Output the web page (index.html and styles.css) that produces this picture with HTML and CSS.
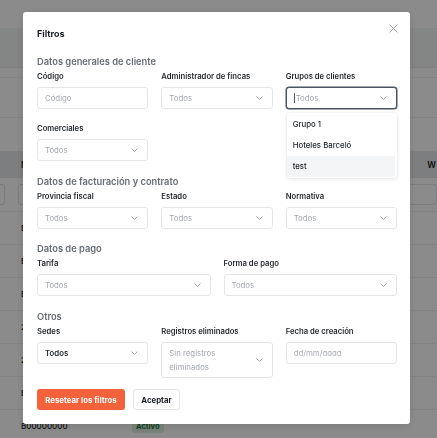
FILE: index.html
```html
<!DOCTYPE html>
<html lang="es">
<head>
<meta charset="utf-8">
<title>Clientes</title>
<link rel="stylesheet" href="styles.css">
</head>
<body>
<div class="page">
  <div class="topbar"></div>
  <div class="band"></div>
  <div class="toolbar"></div>
  <div class="table">
    <div class="thead">
      <span class="th th-first">NIF</span>
      <span class="th th-last">W</span>
    </div>
    <div class="tfilter">
      <span class="fbox fbox-a"></span>
      <span class="fbox fbox-b"></span>
      <span class="fbox fbox-c"></span>
    </div>
    <div class="trow"><span class="cell">E07000000</span></div>
    <div class="trow"><span class="cell">B07000000</span></div>
    <div class="trow"><span class="cell">E07000000</span></div>
    <div class="trow"><span class="cell">2000000</span></div>
    <div class="trow"><span class="cell">2000000</span></div>
    <div class="trow"><span class="cell">E07000000</span></div>
    <div class="trow"><span class="cell">B00000000</span><span class="badge">Activo</span></div>
  </div>
</div>

<div class="overlay"></div>

<div class="modal">
  <div class="modal-head">
    <h2 class="modal-title">Filtros</h2>
    <svg class="close" width="9" height="9" viewBox="0 0 9 9"><path d="M0.5 0.5L8.5 8.5M8.5 0.5L0.5 8.5" stroke="#a6a9ae" stroke-width="1" fill="none"/></svg>
  </div>

  <section class="group group-first">
    <h3 class="group-title">Datos generales de cliente</h3>
    <div class="grid3">
      <div class="field">
        <label class="label">Código</label>
        <div class="control"><span class="ph">Código</span></div>
      </div>
      <div class="field">
        <label class="label">Administrador de fincas</label>
        <div class="control"><span class="ph">Todos</span><svg class="chev" width="7" height="4" viewBox="0 0 7 4"><polyline points="0.5,0.5 3.5,3.5 6.5,0.5" fill="none" stroke="#9a9ea5" stroke-width="0.9"/></svg></div>
      </div>
      <div class="field field-open">
        <label class="label">Grupos de clientes</label>
        <div class="control control-focus"><span class="ph"><span class="caret"></span>Todos</span><svg class="chev" width="7" height="4" viewBox="0 0 7 4"><polyline points="0.5,0.5 3.5,3.5 6.5,0.5" fill="none" stroke="#9a9ea5" stroke-width="0.9"/></svg></div>
        <ul class="menu">
          <li class="opt">Grupo 1</li>
          <li class="opt">Hoteles Barceló</li>
          <li class="opt opt-hover">test</li>
        </ul>
      </div>
      <div class="field">
        <label class="label">Comerciales</label>
        <div class="control"><span class="ph">Todos</span><svg class="chev" width="7" height="4" viewBox="0 0 7 4"><polyline points="0.5,0.5 3.5,3.5 6.5,0.5" fill="none" stroke="#9a9ea5" stroke-width="0.9"/></svg></div>
      </div>
    </div>
  </section>

  <section class="group group-billing">
    <h3 class="group-title">Datos de facturación y contrato</h3>
    <div class="grid3">
      <div class="field">
        <label class="label">Provincia fiscal</label>
        <div class="control"><span class="ph">Todos</span><svg class="chev" width="7" height="4" viewBox="0 0 7 4"><polyline points="0.5,0.5 3.5,3.5 6.5,0.5" fill="none" stroke="#9a9ea5" stroke-width="0.9"/></svg></div>
      </div>
      <div class="field">
        <label class="label">Estado</label>
        <div class="control"><span class="ph">Todos</span><svg class="chev" width="7" height="4" viewBox="0 0 7 4"><polyline points="0.5,0.5 3.5,3.5 6.5,0.5" fill="none" stroke="#9a9ea5" stroke-width="0.9"/></svg></div>
      </div>
      <div class="field">
        <label class="label">Normativa</label>
        <div class="control"><span class="ph">Todos</span><svg class="chev" width="7" height="4" viewBox="0 0 7 4"><polyline points="0.5,0.5 3.5,3.5 6.5,0.5" fill="none" stroke="#9a9ea5" stroke-width="0.9"/></svg></div>
      </div>
    </div>
  </section>

  <section class="group">
    <h3 class="group-title">Datos de pago</h3>
    <div class="grid2">
      <div class="field">
        <label class="label">Tarifa</label>
        <div class="control"><span class="ph">Todos</span><svg class="chev" width="7" height="4" viewBox="0 0 7 4"><polyline points="0.5,0.5 3.5,3.5 6.5,0.5" fill="none" stroke="#9a9ea5" stroke-width="0.9"/></svg></div>
      </div>
      <div class="field">
        <label class="label">Forma de pago</label>
        <div class="control"><span class="ph">Todos</span><svg class="chev" width="7" height="4" viewBox="0 0 7 4"><polyline points="0.5,0.5 3.5,3.5 6.5,0.5" fill="none" stroke="#9a9ea5" stroke-width="0.9"/></svg></div>
      </div>
    </div>
  </section>

  <section class="group group-last">
    <h3 class="group-title">Otros</h3>
    <div class="grid3">
      <div class="field">
        <label class="label">Sedes</label>
        <div class="control"><span class="val">Todos</span><svg class="chev" width="7" height="4" viewBox="0 0 7 4"><polyline points="0.5,0.5 3.5,3.5 6.5,0.5" fill="none" stroke="#9a9ea5" stroke-width="0.9"/></svg></div>
      </div>
      <div class="field">
        <label class="label">Registros eliminados</label>
        <div class="control control-tall"><span class="ph ph-wrap">Sin registros eliminados</span><svg class="chev" width="7" height="4" viewBox="0 0 7 4"><polyline points="0.5,0.5 3.5,3.5 6.5,0.5" fill="none" stroke="#9a9ea5" stroke-width="0.9"/></svg></div>
      </div>
      <div class="field">
        <label class="label">Fecha de creación</label>
        <div class="control"><span class="ph ph-date">dd/mm/aaaa</span></div>
      </div>
    </div>
  </section>

  <div class="actions">
    <button class="btn btn-reset">Resetear los filtros</button>
    <button class="btn btn-ok">Aceptar</button>
  </div>
</div>
</body>
</html>
```

FILE: styles.css
```css
* { box-sizing: border-box; }

html, body {
  margin: 0;
  padding: 0;
  width: 437px;
  height: 438px;
  overflow: hidden;
  font-family: "Inter", "Noto Sans", sans-serif;
  color: #1f2328;
  background: #ffffff;
}

/* ---------- page behind the dialog ---------- */
.page {
  display: flex;
  flex-direction: column;
}

.topbar {
  height: 28px;
  background: #ffffff;
}

.band {
  height: 40px;
  background: #f3f4f5;
  border-bottom: 1px solid #e9eaec;
}

.toolbar {
  margin-top: 9px;
  height: 41px;
  background: #ffffff;
  border-top: 1px solid #f0f0f2;
  border-bottom: 1px solid #eceef0;
}

.table {
  margin-top: 33px;
  display: flex;
  flex-direction: column;
}

.thead {
  height: 27px;
  background: #e6e7e9;
  display: flex;
  align-items: center;
  justify-content: space-between;
  padding: 0 0 0 21px;
  font-size: 8.5px;
  font-weight: 600;
  color: #222;
}

.th-last {
  margin-right: 1px;
}

.tfilter {
  height: 34px;
  display: flex;
  align-items: center;
  border-bottom: 1px solid #eceef0;
}

.fbox {
  height: 21px;
  border: 1px solid #dfe1e4;
  border-radius: 3px;
  background: #fff;
}

.fbox-a { width: 27px; margin-left: -20px; }
.fbox-b { width: 393px; margin-left: 13px; }
.fbox-c { width: 40px; margin-left: 15px; }

.trow {
  height: 33px;
  display: flex;
  align-items: center;
  padding-left: 21px;
  border-bottom: 1px solid #eceef0;
  font-size: 8px;
  font-weight: 500;
  color: #222;
}

.cell {
  width: 111px;
}

.badge {
  font-size: 7.5px;
  font-weight: 700;
  color: #1f7a3e;
  background: #dcefe2;
  border-radius: 3px;
  padding: 2px 4px;
}

.overlay {
  position: fixed;
  inset: 0;
  background: rgba(0, 0, 0, 0.455);
}

/* ---------- filter dialog ---------- */
.modal {
  position: fixed;
  left: 23px;
  top: 12px;
  width: 387px;
  padding: 16px 13px 14px 14px;
  background: #ffffff;
  border-radius: 3px;
  box-shadow: 0 2px 8px rgba(0, 0, 0, 0.12);
}

.modal-head {
  display: flex;
  justify-content: space-between;
  align-items: flex-start;
  height: 12px;
}

.modal-title {
  margin: 0;
  font-size: 9px;
  line-height: 12px;
  font-weight: 700;
  color: #1b1f24;
}

.close {
  margin-top: -4px;
  margin-right: -1px;
}

.group {
  margin-top: 14px;
}

.group-first {
  margin-top: 16px;
}

.group-billing {
  margin-top: 15px;
}

.group-last {
  margin-top: 15px;
}

.group-title {
  margin: 0 0 3px;
  font-size: 9.3px;
  line-height: 12px;
  font-weight: 600;
  color: #686d75;
}

.grid3 {
  display: grid;
  grid-template-columns: repeat(3, 1fr);
  column-gap: 13px;
  row-gap: 14px;
  align-items: start;
}

.grid2 {
  display: grid;
  grid-template-columns: 1fr 1fr;
  column-gap: 13px;
}

.field {
  position: relative;
  display: flex;
  flex-direction: column;
}

.label {
  font-size: 7.7px;
  line-height: 12px;
  font-weight: 600;
  color: #1f2328;
  margin-bottom: 4px;
}

.control {
  height: 22px;
  border: 1px solid #e4e6e9;
  border-radius: 3px;
  display: flex;
  align-items: center;
  justify-content: space-between;
  padding: 0 9px 0 7px;
  background: #fff;
}

.control-focus {
  border-color: #4a5361;
  box-shadow: 0 0 0 0.5px #4a5361;
}

.control-tall {
  height: 36px;
}

.ph {
  font-size: 7.8px;
  color: #a3a7ae;
  display: flex;
  align-items: center;
}

.ph-wrap {
  display: block;
  width: 80px;
  line-height: 14px;
}

.ph-date {
  font-feature-settings: "cv11" 1;
  color: #a9adb3;
}

.val {
  font-size: 7.8px;
  font-weight: 600;
  color: #22262b;
}

.caret {
  display: inline-block;
  width: 1px;
  height: 10px;
  background: #555b63;
  margin-right: 1px;
}

.chev {
  flex: none;
}

.menu {
  position: absolute;
  top: 42px;
  left: 1px;
  right: 0;
  margin: 0;
  padding: 1px 2px 1px 0;
  list-style: none;
  background: #fff;
  border-radius: 3px;
  box-shadow: 0 1px 4px rgba(0, 0, 0, 0.1), 0 0 0 0.5px rgba(0, 0, 0, 0.04);
  z-index: 2;
}

.opt {
  height: 21px;
  line-height: 21px;
  padding-left: 6px;
  font-size: 7.8px;
  font-weight: 500;
  color: #22262b;
  border-radius: 2px;
}

.opt-hover {
  background: #f4f5f7;
}

.actions {
  display: flex;
  gap: 8px;
  margin-top: 11px;
}

.btn {
  height: 21px;
  border-radius: 3px;
  font-family: inherit;
  font-size: 7.8px;
  font-weight: 700;
  padding: 0;
  white-space: nowrap;
  cursor: pointer;
}

.btn-reset {
  width: 88px;
  background: #f4623c;
  border: none;
  color: #ffffff;
}

.btn-ok {
  width: 47px;
  background: #ffffff;
  border: 1px solid #e4e6e9;
  color: #1b1f24;
}
```
